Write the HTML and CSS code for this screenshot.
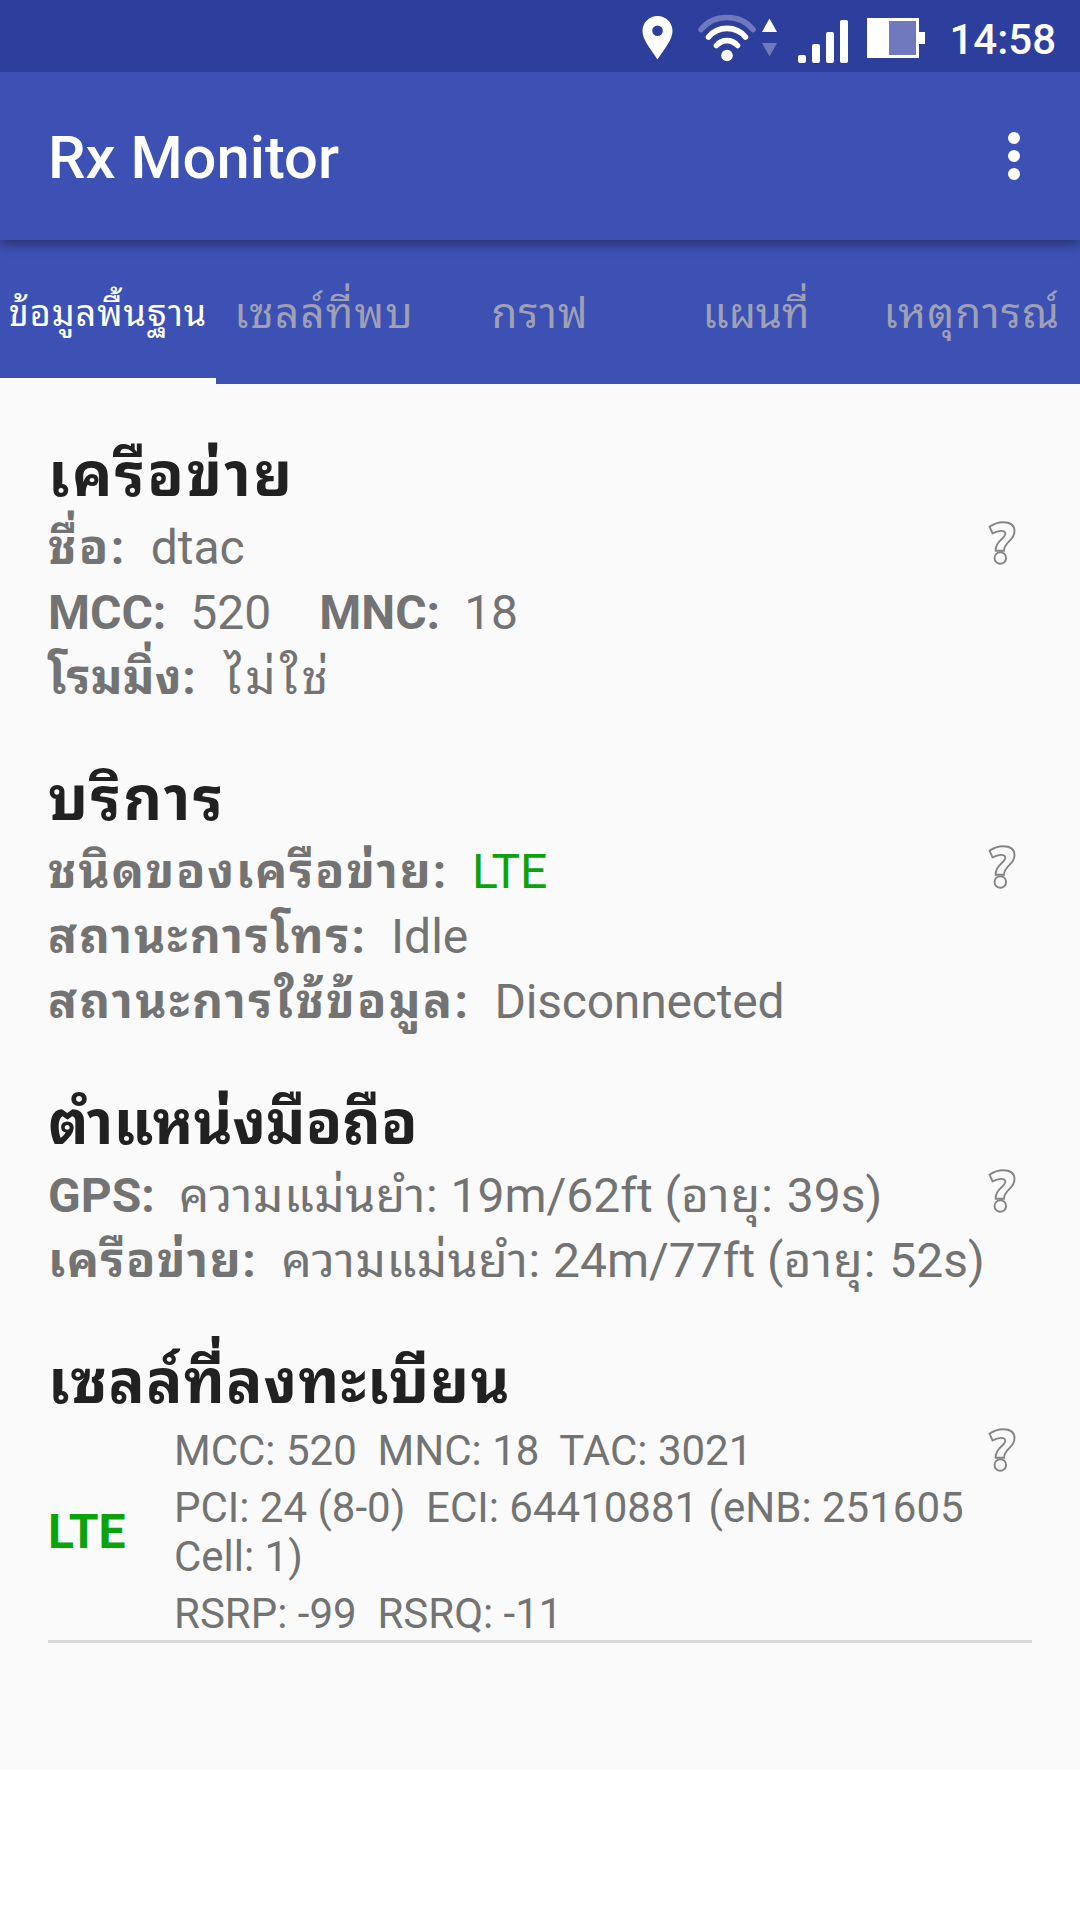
FILE: index.html
```html
<!DOCTYPE html>
<html lang="th">
<head>
<meta charset="utf-8">
<title>Rx Monitor</title>
<link rel="stylesheet" href="styles.css">
</head>
<body>
<header class="status">
  <svg class="status-icons" width="310" height="72" viewBox="620 0 310 72">
    <path fill="#fff" fill-rule="evenodd" d="M657.500 16c8.500 0 15 6.700 15 15 0 9-8 17.500-15 28.500-7-11-15-19.500-15-28.500 0-8.300 6.500-15 15-15zm0 9.500a5.300 5.300 0 1 0 0 10.600 5.300 5.300 0 0 0 0-10.600z"/>
    <g fill="none" stroke-linecap="round" stroke-width="5.600">
      <path stroke="#7079bd" d="M701 29.500c13-16 39-16 52 0"/>
      <path stroke="#fff" d="M708.500 37c9.500-11.500 27.500-11.500 37 0M716.500 45.500c5.500-6.500 15.500-6.500 21 0"/>
    </g>
    <circle cx="727" cy="55.500" r="5.800" fill="#fff"/>
    <path fill="#fff" d="M769.500 18.500 777 32h-15z"/>
    <path fill="#7079bd" d="M762 43h15l-7.500 13.500z"/>
    <g fill="#fff">
      <rect x="798" y="55" width="8" height="8" rx="2"/>
      <rect x="812" y="44" width="8" height="19" rx="2"/>
      <rect x="826" y="32" width="8" height="31" rx="2"/>
      <rect x="840" y="20" width="8" height="43" rx="2"/>
      <path d="M867 18h52v14h6v12h-6v14h-52z"/>
    </g>
    <path fill="#7079bd" d="M889 21h27v34h-27z"/>
  </svg>
  <time class="clock">14:58</time>
</header>
<div class="appbar">
  <h1 class="title">Rx Monitor</h1>
  <svg class="more" width="12" height="48" viewBox="0 0 12 48"><g fill="#fff"><circle cx="6" cy="6" r="6"/><circle cx="6" cy="24" r="6"/><circle cx="6" cy="42" r="6"/></g></svg>
</div>
<nav class="tabs">
  <a class="tab active"><span class="ls-10">ข้อมูลพื้นฐาน</span></a>
  <a class="tab"><span class="ls-13">เซลล์ที่พบ</span></a>
  <a class="tab"><span class="ls-10">กราฟ</span></a>
  <a class="tab"><span>แผนที่</span></a>
  <a class="tab"><span class="ls-13">เหตุการณ์</span></a>
</nav>
<main class="content">
  <svg width="0" height="0" class="defs"><symbol id="help" viewBox="0 0 28 44"><path d="M1.500 5.700C5.500 3 10 1.200 15 1.200c7 0 11.500 3 11.500 9 0 9.500-10.500 10.800-10.500 19.500H7.700c-.7-10.200 9.600-11.700 9.600-17 0-4.200-7-3.200-12.800-.4z"/><circle cx="12.300" cy="37" r="5.800"/></symbol></svg>
  <section class="block">
    <h2><span class="ls-24">เครือข่าย</span></h2>
    <svg class="help"><use href="#help"/></svg>
    <p><b class="ls-24">ชื่อ:</b><span class="value">dtac</span></p>
    <p><b>MCC:</b><span class="value">520</span><b class="second">MNC:</b><span class="value">18</span></p>
    <p><b class="ls-05">โรมมิ่ง:</b><span class="value thai ls-40">ไม่ใช่</span></p>
  </section>
  <section class="block">
    <h2><span class="ls-26">บริการ</span></h2>
    <svg class="help"><use href="#help"/></svg>
    <p><b class="ls-18">ชนิดของเครือข่าย:</b><span class="value lte">LTE</span></p>
    <p><b class="ls-19">สถานะการโทร:</b><span class="value">Idle</span></p>
    <p><b class="ls-24">สถานะการใช้ข้อมูล:</b><span class="value long">Disconnected</span></p>
  </section>
  <section class="block">
    <h2><span>ตำแหน่งมือถือ</span></h2>
    <svg class="help"><use href="#help"/></svg>
    <p><b>GPS:</b><span class="value"><span class="ls-05">ความแม่นยำ: </span>19m/62ft (<span class="ls-10">อายุ: </span>39s)</span></p>
    <p><b class="ls-15">เครือข่าย:</b><span class="value"><span class="ls-05">ความแม่นยำ: </span>24m/77ft (<span class="ls-10">อายุ: </span>52s)</span></p>
  </section>
  <section class="block">
    <h2><span class="ls-13">เซลล์ที่ลงทะเบียน</span></h2>
    <svg class="help"><use href="#help"/></svg>
    <div class="cell">
      <b class="lte">LTE</b>
      <div class="lines">
        <div>MCC: 520&nbsp; MNC: 18&nbsp; TAC: 3021</div>
        <div>PCI: 24 (8-0)&nbsp; ECI: 64410881 (eNB: 251605 Cell: 1)</div>
        <div>RSRP: -99&nbsp; RSRQ: -11</div>
      </div>
    </div>
  </section>
</main>
</body>
</html>
```
FILE: styles.css
```css
* { box-sizing: border-box; }
body {
  margin: 0;
  width: 1080px;
  height: 1920px;
  overflow: hidden;
  background: #fff;
  font-family: Roboto, "Noto Sans Thai Looped", sans-serif;
}
.status {
  display: flex;
  height: 72px;
  padding-right: 24px;
  background: #2e3e9c;
}
.status-icons {
  flex: none;
  margin-left: 620px;
}
.clock {
  width: 125px;
  margin-left: auto;
  text-align: right;
  color: #fff;
  font-size: 42px;
  font-weight: 500;
  line-height: 80px;
}
.appbar {
  position: relative;
  z-index: 1;
  display: flex;
  justify-content: space-between;
  height: 168px;
  padding: 0 60px 0 48px;
  background: #3d51b4;
  box-shadow: 0 3px 12px rgba(0, 0, 0, .45);
  clip-path: inset(0 0 -24px 0);
}
.title {
  margin: 0;
  color: #fff;
  font-size: 59.7px;
  font-weight: 500;
  line-height: 173px;
}
.more { margin-top: 60px; }
.tabs {
  display: grid;
  grid-template-columns: repeat(5, 216px);
  height: 144px;
  background: #3d51b4;
}
.tab {
  text-align: center;
  color: #9fa0b4;
  font-size: 42px;
  line-height: 148px;
  height: 144px;
  white-space: nowrap;
}
.active {
  border-bottom: 6px solid #fff;
  color: #fff;
  font-size: 36px;
}
.content {
  height: 1386px;
  padding: 60px 48px 0;
  background: #fafafa;
  color: #737373;
  font-size: 48px;
}
.defs { position: absolute; }
.block {
  position: relative;
  margin-bottom: 58px;
}
h2 {
  margin: 0;
  height: 71px;
  color: #212121;
  font-size: 60px;
  line-height: 64px;
}
p {
  margin: 0;
  height: 65px;
  line-height: 65px;
  white-space: nowrap;
}
.value { margin-left: 24px; }
.thai { margin-left: 28px; }
.long { letter-spacing: -.2px; }
.second { margin-left: 48px; }

/* Thai tracking, per label */
.ls-05 { letter-spacing: .5px; }
.ls-10 { letter-spacing: 1px; }
.ls-13 { letter-spacing: 1.3px; }
.ls-15 { letter-spacing: 1.5px; }
.ls-18 { letter-spacing: 1.85px; }
.ls-19 { letter-spacing: 1.95px; }
.ls-24 { letter-spacing: 2.4px; }
.ls-26 { letter-spacing: 2.6px; }
.ls-40 { letter-spacing: 4px; }

.help {
  position: absolute;
  top: 77px;
  right: 16px;
  width: 28px;
  height: 44px;
  fill: none;
  stroke: #858585;
  stroke-width: 1.9;
}
.lte { color: #0aa30a; }
.cell {
  display: flex;
  align-items: center;
  height: 221px;
  border-bottom: 3px solid #d9d9d9;
}
.cell .lte { width: 126px; }
.lines {
  width: 800px;
  padding-top: 9px;
  font-size: 42px;
  line-height: 49px;
}
.lines div { margin-bottom: 8px; }
```
